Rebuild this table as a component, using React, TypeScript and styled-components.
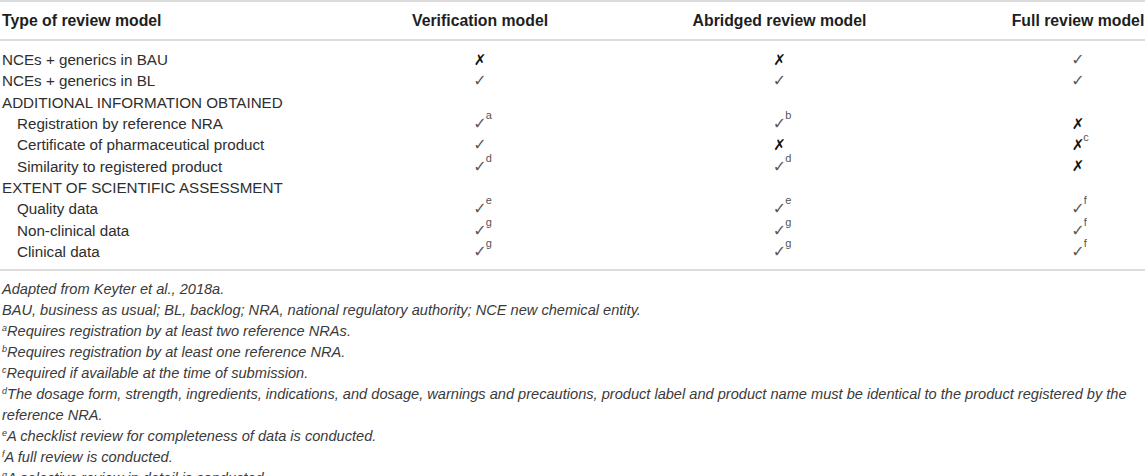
import React from "react";
import styled, { createGlobalStyle } from "styled-components";

const Global = createGlobalStyle`
  html, body { margin: 0; padding: 0; background: #ffffff; }
  body { font-family: "Liberation Sans", Arial, sans-serif; color: #2e2e2e; }
`;

const COLS = "412px 136px 463px 134px";

const Page = styled.div`
  width: 1145px;
  overflow: hidden;
`;

const HeadRow = styled.div`
  display: grid;
  grid-template-columns: ${COLS};
  height: 37px;
  align-items: center;
  border-top: 2px solid #dcdcdc;
  border-bottom: 2px solid #dcdcdc;
`;

const HeadCell = styled.div<{ $left?: boolean }>`
  font-weight: 700;
  font-size: 15.8px;
  color: #1e1e1e;
  text-align: ${(p) => (p.$left ? "left" : "center")};
  padding-left: ${(p) => (p.$left ? "2px" : "0")};
  white-space: nowrap;
`;

const Body = styled.div`
  padding: 8px 0 7px;
  border-bottom: 2px solid #dcdcdc;
`;

const Row = styled.div`
  display: grid;
  grid-template-columns: ${COLS};
  height: 21.3px;
  align-items: center;
`;

const Label = styled.div<{ $indent?: boolean }>`
  font-size: 15.2px;
  color: #2e2e2e;
  padding-left: ${(p) => (p.$indent ? "17px" : "2px")};
  white-space: nowrap;
`;

const MarkCell = styled.div`
  text-align: center;
  white-space: nowrap;
`;

const MarkWrap = styled.span`
  position: relative;
  display: inline-block;
`;

const Check = styled.span`
  font-family: "DejaVu Sans", sans-serif;
  font-size: 16px;
  color: #5a5a5a;
`;

const Cross = styled.span`
  font-family: "DejaVu Sans", sans-serif;
  font-weight: 700;
  font-size: 15px;
  color: #111;
`;

const CellSup = styled.span`
  position: absolute;
  left: calc(100% - 1px);
  top: -5px;
  font-size: 11px;
  color: #555;
  font-family: "Liberation Sans", Arial, sans-serif;
`;

const Notes = styled.div`
  padding-top: 8px;
  padding-left: 2px;
  font-family: "Liberation Sans", Arial, sans-serif;
  font-style: italic;
  font-size: 14.6px;
  color: #3a3a3a;
`;

const Note = styled.p`
  margin: 0;
  line-height: 21px;
`;

const NoteSup = styled.sup`
  font-size: 9px;
  vertical-align: 5px;
  line-height: 0;
`;

type Mark = { k: "c" | "x" | null; s?: string };

const MarkView = ({ m }: { m: Mark }) => {
  if (!m.k) return <MarkCell />;
  return (
    <MarkCell>
      <MarkWrap>
        {m.k === "c" ? <Check>✓</Check> : <Cross>✗</Cross>}
        {m.s && <CellSup>{m.s}</CellSup>}
      </MarkWrap>
    </MarkCell>
  );
};

const rows: { label: string; indent?: boolean; marks: Mark[] }[] = [
  { label: "NCEs + generics in BAU", marks: [{ k: "x" }, { k: "x" }, { k: "c" }] },
  { label: "NCEs + generics in BL", marks: [{ k: "c" }, { k: "c" }, { k: "c" }] },
  { label: "ADDITIONAL INFORMATION OBTAINED", marks: [{ k: null }, { k: null }, { k: null }] },
  { label: "Registration by reference NRA", indent: true, marks: [{ k: "c", s: "a" }, { k: "c", s: "b" }, { k: "x" }] },
  { label: "Certificate of pharmaceutical product", indent: true, marks: [{ k: "c" }, { k: "x" }, { k: "x", s: "c" }] },
  { label: "Similarity to registered product", indent: true, marks: [{ k: "c", s: "d" }, { k: "c", s: "d" }, { k: "x" }] },
  { label: "EXTENT OF SCIENTIFIC ASSESSMENT", marks: [{ k: null }, { k: null }, { k: null }] },
  { label: "Quality data", indent: true, marks: [{ k: "c", s: "e" }, { k: "c", s: "e" }, { k: "c", s: "f" }] },
  { label: "Non-clinical data", indent: true, marks: [{ k: "c", s: "g" }, { k: "c", s: "g" }, { k: "c", s: "f" }] },
  { label: "Clinical data", indent: true, marks: [{ k: "c", s: "g" }, { k: "c", s: "g" }, { k: "c", s: "f" }] },
];

const notes: { s?: string; t: string }[] = [
  { t: "Adapted from Keyter et al., 2018a." },
  { t: "BAU, business as usual; BL, backlog; NRA, national regulatory authority; NCE new chemical entity." },
  { s: "a", t: "Requires registration by at least two reference NRAs." },
  { s: "b", t: "Requires registration by at least one reference NRA." },
  { s: "c", t: "Required if available at the time of submission." },
  {
    s: "d",
    t: "The dosage form, strength, ingredients, indications, and dosage, warnings and precautions, product label and product name must be identical to the product registered by the reference NRA.",
  },
  { s: "e", t: "A checklist review for completeness of data is conducted." },
  { s: "f", t: "A full review is conducted." },
  { s: "g", t: "A selective review in detail is conducted." },
];

export default function App() {
  return (
    <Page>
      <Global />
      <HeadRow>
        <HeadCell $left>Type of review model</HeadCell>
        <HeadCell>Verification model</HeadCell>
        <HeadCell>Abridged review model</HeadCell>
        <HeadCell>Full review model</HeadCell>
      </HeadRow>
      <Body>
        {rows.map((r) => (
          <Row key={r.label}>
            <Label $indent={r.indent}>{r.label}</Label>
            {r.marks.map((m, i) => (
              <MarkView key={i} m={m} />
            ))}
          </Row>
        ))}
      </Body>
      <Notes>
        {notes.map((n, i) => (
          <Note key={i}>
            {n.s && <NoteSup>{n.s}</NoteSup>}
            {n.t}
          </Note>
        ))}
      </Notes>
    </Page>
  );
}
